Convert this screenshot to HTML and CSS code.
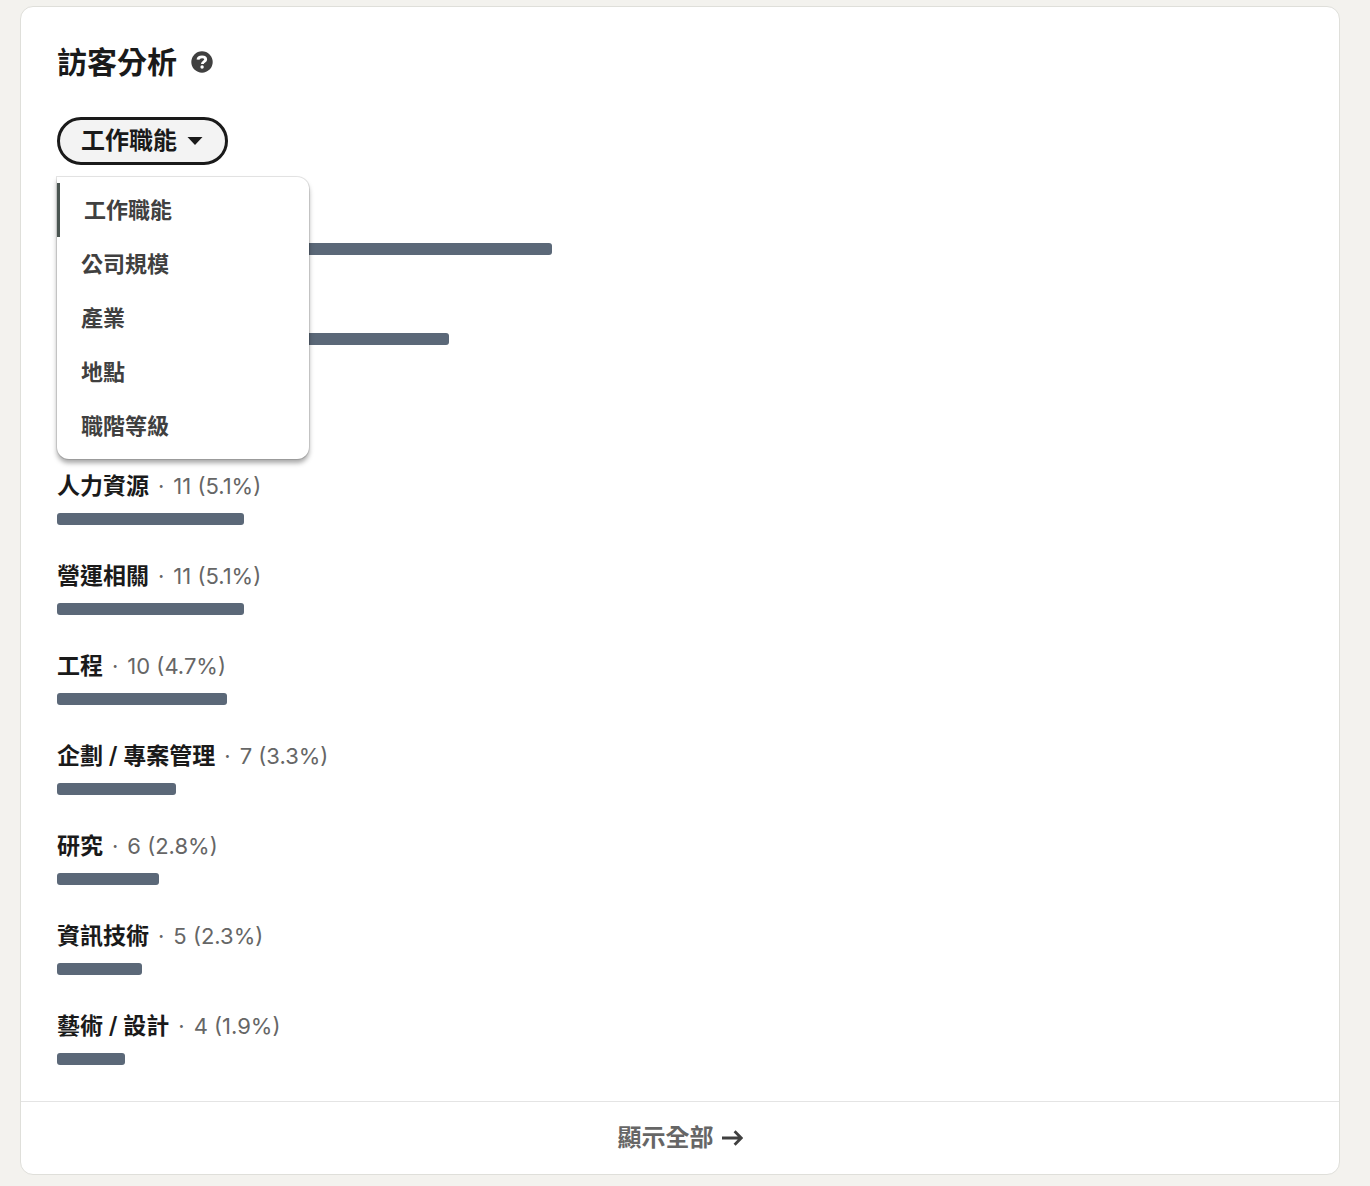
FILE: index.html
```
<!DOCTYPE html>
<html lang="zh-Hant">
<head>
    <meta charset="utf-8">
    <title>訪客分析</title>
    <meta name="viewport" content="width=device-width, initial-scale=1.0">
    <link rel="stylesheet" href="styles.css">
</head>
<body>
    <main class="card">
        <div class="card-body">
            <div class="card-header">
                <h2 class="card-title">訪客分析</h2>
                <button class="help-button" type="button" aria-label="?">
                    <svg width="22" height="22" viewBox="0 0 22 22" aria-hidden="true">
                        <circle cx="11" cy="11" r="10.7" fill="#404040"/>
                        <path d="M7 8.7C7.2 6.8 8.8 5.9 11 5.9C13.3 5.9 14.7 6.9 14.7 8.6C14.7 10.8 11.4 10.5 11.4 13" fill="none" stroke="#fff" stroke-width="2.9"/>
                        <circle cx="11.1" cy="16" r="1.7" fill="#fff"/>
                    </svg>
                </button>
            </div>

            <!-- Filter button with its open menu -->
            <div class="dropdown">
                <button class="dropdown-button" type="button" aria-expanded="true">
                    工作職能
                    <svg width="16" height="8" viewBox="0 0 16 8" aria-hidden="true">
                        <path d="M0.5 0H15.5L8 8Z" fill="#1a1a1a"/>
                    </svg>
                </button>
                <div class="dropdown-menu">
                    <button class="menu-item selected" type="button">工作職能</button>
                    <button class="menu-item" type="button">公司規模</button>
                    <button class="menu-item" type="button">產業</button>
                    <button class="menu-item" type="button">地點</button>
                    <button class="menu-item" type="button">職階等級</button>
                </div>
            </div>

            <ul class="chart">
                <li class="chart-row">
                    <div class="chart-label"></div>
                    <div class="bar" style="width: 39.73%"></div>
                </li>
                <li class="chart-row">
                    <div class="chart-label"></div>
                    <div class="bar" style="width: 31.46%"></div>
                </li>
                <li class="chart-row">
                    <div class="chart-label"></div>
                    <div class="bar" style="width: 16.37%"></div>
                </li>
                <li class="chart-row">
                    <div class="chart-label"><strong>人力資源</strong><span>·</span><span>11 (5.1%)</span></div>
                    <div class="bar" style="width: 15.01%"></div>
                </li>
                <li class="chart-row">
                    <div class="chart-label"><strong>營運相關</strong><span>·</span><span>11 (5.1%)</span></div>
                    <div class="bar" style="width: 15.01%"></div>
                </li>
                <li class="chart-row">
                    <div class="chart-label"><strong>工程</strong><span>·</span><span>10 (4.7%)</span></div>
                    <div class="bar" style="width: 13.64%"></div>
                </li>
                <li class="chart-row">
                    <div class="chart-label"><strong>企劃 / 專案管理</strong><span>·</span><span>7 (3.3%)</span></div>
                    <div class="bar" style="width: 9.55%"></div>
                </li>
                <li class="chart-row">
                    <div class="chart-label"><strong>研究</strong><span>·</span><span>6 (2.8%)</span></div>
                    <div class="bar" style="width: 8.19%"></div>
                </li>
                <li class="chart-row">
                    <div class="chart-label"><strong>資訊技術</strong><span>·</span><span>5 (2.3%)</span></div>
                    <div class="bar" style="width: 6.82%"></div>
                </li>
                <li class="chart-row">
                    <div class="chart-label"><strong>藝術 / 設計</strong><span>·</span><span>4 (1.9%)</span></div>
                    <div class="bar" style="width: 5.46%"></div>
                </li>
            </ul>
        </div>

        <a class="card-footer" href="#">
            <span>顯示全部</span>
            <svg width="21" height="16" viewBox="0 0 21 16" aria-hidden="true">
                <path d="M0 8H19M12.6 1.2L19.2 8L12.6 14.8" fill="none" stroke="#404040" stroke-width="2.8"/>
            </svg>
        </a>
    </main>
</body>
</html>
```

FILE: styles.css
```
* {
    box-sizing: border-box;
}

body {
    margin: 0;
    padding: 6px 30px 11px 20px;
    background-color: #f3f2ee;
    color: #1a1a1a;
    font-family: Inter, "Noto Sans CJK TC", sans-serif;
    font-size: 22px;
}

button {
    font-family: inherit;
    cursor: pointer;
}

.card {
    background-color: #fff;
    border: 1px solid #dfdfda;
    border-radius: 13px;
}

.card-body {
    padding: 36px;
}

.card-header {
    display: flex;
    align-items: center;
    gap: 14px;
    margin-bottom: 36px;
}

.card-title {
    margin: 0;
    font-size: 30px;
    font-weight: 600;
    line-height: 38px;
}

.help-button {
    display: flex;
    padding: 0;
    border: 0;
    background: none;
}

.dropdown {
    position: relative;
    width: fit-content;
    margin-bottom: 36px;
}

.dropdown-button {
    display: flex;
    align-items: center;
    gap: 10px;
    height: 48px;
    padding: 0 22px 0 21px;
    border: 3px solid #1a1a1a;
    border-radius: 24px;
    background-color: #f3f3f3;
    color: #1a1a1a;
    font-size: 24px;
    font-weight: 600;
    line-height: 42px;
}

.dropdown-menu {
    position: absolute;
    top: 60px;
    left: 0;
    width: 252px;
    padding: 6px 0;
    background-color: #fff;
    border-radius: 0 12px 12px 12px;
    box-shadow: 0 0 0 1px rgba(0, 0, 0, 0.1), 0 4px 5px rgba(0, 0, 0, 0.35);
}

.menu-item {
    display: block;
    width: 100%;
    height: 54px;
    padding: 0 24px;
    border: 0;
    background: none;
    color: #404040;
    font-size: 22px;
    font-weight: 600;
    line-height: 54px;
    text-align: left;
}

.menu-item.selected {
    border-left: 3px solid #4a5551;
}

.chart {
    display: flex;
    flex-direction: column;
    gap: 36px;
    margin: 0;
    padding: 0;
    list-style: none;
}

.chart-label {
    display: flex;
    gap: 9px;
    height: 30px;
    margin-bottom: 12px;
    color: #666;
    line-height: 30px;
}

.chart-label strong {
    color: #1a1a1a;
    font-size: 23px;
    font-weight: 600;
}

.bar {
    height: 12px;
    border-radius: 3px;
    background-color: #5b6878;
}

.card-footer {
    display: flex;
    align-items: center;
    justify-content: center;
    gap: 8px;
    height: 73px;
    border-top: 1px solid #e4e4e4;
    color: #666;
    font-size: 24px;
    font-weight: 600;
    line-height: 72px;
    text-decoration: none;
}
```
